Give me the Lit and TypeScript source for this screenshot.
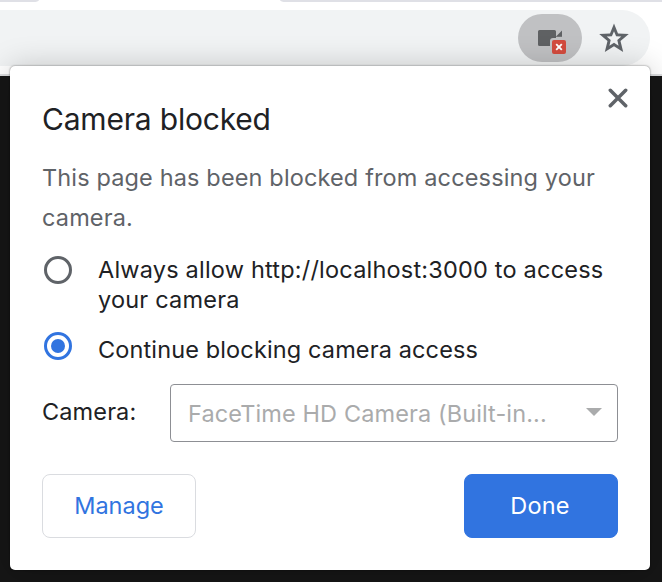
import { LitElement, html, css } from "lit";
import { customElement, state } from "lit/decorators.js";

@customElement("app-root")
export class AppRoot extends LitElement {
  @state() private choice = "block";

  static styles = css`
    :host {
      display: block;
      position: relative;
      width: 662px;
      height: 582px;
      overflow: hidden;
      background: #161616;
      color: #202124;
      font: 400 23.5px/30px Inter, "Liberation Sans", sans-serif;
    }
    * { box-sizing: border-box; }
    svg { display: block; }
    .tabs {
      display: flex;
      justify-content: space-between;
      height: 2px;
      background: #fff;
    }
    .tab-left { width: 39px; background: #dfe0e6; border-bottom-right-radius: 6px 2px; }
    .tab-right { width: 382px; background: #dfe0e6; border-bottom-left-radius: 6px 2px; }
    .toolbar {
      height: 74px;
      padding: 8px 12px 8px 0;
      background: #fff;
      border-bottom: 2px solid #dcdddf;
    }
    .omnibox {
      display: flex;
      justify-content: flex-end;
      align-items: center;
      gap: 15px;
      height: 56px;
      padding-right: 19px;
      background: #f1f3f4;
      border-radius: 0 28px 28px 0;
    }
    .chip {
      display: flex;
      width: 64px;
      height: 48px;
      padding: 14px 0 0 18px;
      border-radius: 24px;
      background: #c0c1c3;
    }
    .dialog {
      position: absolute;
      left: 10px;
      top: 66px;
      width: 640px;
      height: 504px;
      padding: 33px 32px 32px;
      border-radius: 5px;
      background: #fff;
      box-shadow: 0 0 2px rgba(0, 0, 0, 0.55), 0 2px 32px rgba(0, 0, 0, 0.22);
    }
    .close {
      position: absolute;
      right: 22px;
      top: 22px;
      padding: 0;
      border: 0;
      background: none;
    }
    h1 { margin: 0; font-size: 30px; line-height: 40px; font-weight: 400; letter-spacing: -0.2px; }
    p { margin: 19px 0 0; line-height: 40px; color: #5f6368; letter-spacing: 0.14px; }
    .option { display: flex; gap: 26px; margin-top: 17px; letter-spacing: 0.2px; cursor: pointer; }
    .option + .option { margin-top: 20px; letter-spacing: 0.13px; }
    .radio {
      flex: none;
      display: grid;
      place-items: center;
      width: 28px;
      height: 28px;
      margin: 1px 0 0 2px;
      border: 3px solid #5f6368;
      border-radius: 50%;
    }
    .option + .option .radio { margin-top: -3px; }
    .radio.on { border-color: #3174e0; }
    .radio.on::after { content: ""; width: 14px; height: 14px; border-radius: 50%; background: #3174e0; }
    .device { display: flex; justify-content: space-between; margin-top: 19px; }
    .label { line-height: 55px; letter-spacing: 0.12px; }
    .select {
      display: flex;
      justify-content: space-between;
      align-items: center;
      width: 448px;
      height: 58px;
      padding: 0 15px 0 17px;
      border: 1px solid #8d8f94;
      border-radius: 4px;
      color: #aaabac;
      letter-spacing: 0.11px;
    }
    .select span { padding-top: 2px; }
    .actions { display: flex; justify-content: space-between; margin-top: 32px; }
    .btn {
      width: 154px;
      height: 64px;
      padding: 0;
      border: 1px solid #dadce0;
      border-radius: 8px;
      background: #fff;
      color: #3174e0;
      font: inherit;
    }
    .primary { padding-right: 2px; border-color: #3174e0; background: #3174e0; color: #fff; letter-spacing: 0.2px; }
  `;

  private option(value: string, text: unknown) {
    return html`<div class="option" role="radio" aria-checked=${this.choice === value}
      @click=${() => (this.choice = value)}>
      <span class="radio ${this.choice === value ? "on" : ""}"></span><span>${text}</span>
    </div>`;
  }

  render() {
    return html`
      <div class="tabs"><div class="tab-left"></div><div class="tab-right"></div></div>
      <div class="toolbar">
        <div class="omnibox">
          <div class="chip">
            <svg width="32" height="28" viewBox="0 0 32 28">
              <path fill="#5f6163" d="M3.500 2h15Q20 2 20 3.500v5l6-6V10h-6v8H3.500Q2 18 2 16.500v-13Q2 2 3.500 2z"/>
              <rect x="14" y="10" width="17.500" height="17.500" rx="3" fill="#c0c1c3"/>
              <path fill="#c0c1c3" d="M20 8.800h7V11h-7z"/>
              <rect x="16" y="12" width="14" height="14" rx="2" fill="#d34b3e"/>
              <path d="M20.200 16.200l5.600 5.600m0-5.600l-5.600 5.600" stroke="#fff" stroke-width="1.900"/>
            </svg>
          </div>
          <svg width="34" height="34" viewBox="0 0 34 34">
            <path fill="#5f6368" fill-rule="evenodd" d="M17 2.500L21 12.400 31.800 13.100 23.500 20 26.200 31.100 17 25.200 7.800 31.100 10.500 20 2.200 13.100 13 12.400zM17 10.200L14.900 15.200 9.700 15.600 13.700 19.100 12.400 24.700 17 21.700 21.600 24.700 20.300 19.100 24.300 15.600 19.100 15.200z"/>
          </svg>
        </div>
      </div>
      <div class="dialog" role="dialog">
        <button class="close" aria-label="Close">
          <svg width="20" height="20" viewBox="0 0 20 20"><path d="M2.300 2.300l15.400 15.400M17.700 2.300L2.300 17.700" stroke="#5f6368" stroke-width="3.500" stroke-linecap="round"/></svg>
        </button>
        <h1>Camera blocked</h1>
        <p>This page has been blocked from accessing your<br />camera.</p>
        ${this.option("allow", html`Always allow http://localhost:3000 to access<br />your camera`)}
        ${this.option("block", "Continue blocking camera access")}
        <div class="device">
          <span class="label">Camera:</span>
          <div class="select">
            <span>FaceTime HD Camera (Built-in...</span>
            <svg width="16" height="10" viewBox="0 0 16 10"><path d="M0 0h16L8 8z" fill="#aaabac"/></svg>
          </div>
        </div>
        <div class="actions">
          <button class="btn">Manage</button>
          <button class="btn primary">Done</button>
        </div>
      </div>
    `;
  }
}
